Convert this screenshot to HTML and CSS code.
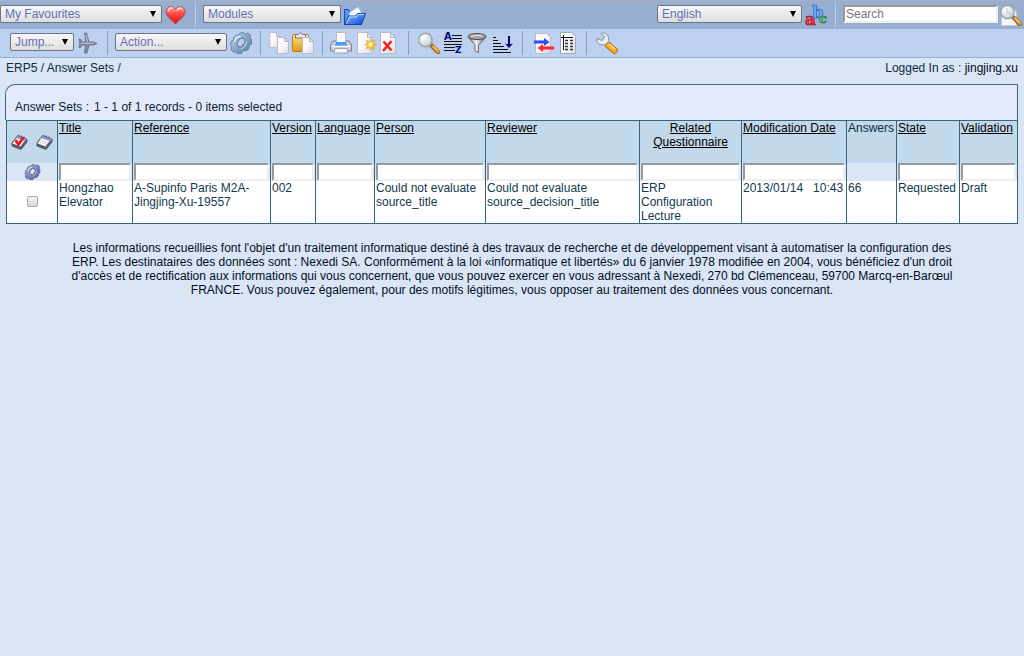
FILE: index.html
```html
<!DOCTYPE html>
<html lang="en">
<head>
<meta charset="utf-8">
<title>ERP5 - Answer Sets</title>
<link rel="stylesheet" href="styles.css">
</head>
<body>
<svg class="defs" aria-hidden="true">
  <defs>
    <linearGradient id="g-paper" x1="0" y1="0" x2="1" y2="1"><stop offset="0" stop-color="#fff"/><stop offset=".5" stop-color="#f8f8fb"/><stop offset="1" stop-color="#d9dbe4"/></linearGradient>
    <linearGradient id="g-heart" x1="0" y1="0" x2="0" y2="1"><stop offset="0" stop-color="#ffb0a8"/><stop offset=".4" stop-color="#ff4a42"/><stop offset="1" stop-color="#dc1010"/></linearGradient>
    <linearGradient id="g-folder" x1="0" y1="0" x2="1" y2="1"><stop offset="0" stop-color="#8cc8ff"/><stop offset="1" stop-color="#0a3fd8"/></linearGradient>
    <linearGradient id="g-steel" x1="0" y1="0" x2="1" y2="1"><stop offset="0" stop-color="#c4d6e8"/><stop offset=".5" stop-color="#8aa9c8"/><stop offset="1" stop-color="#557899"/></linearGradient>
    <linearGradient id="g-violet" x1="0" y1="0" x2="1" y2="1"><stop offset="0" stop-color="#b4b4dc"/><stop offset=".5" stop-color="#8585bd"/><stop offset="1" stop-color="#55558c"/></linearGradient>
    <linearGradient id="g-gold" x1="0" y1="0" x2="0" y2="1"><stop offset="0" stop-color="#ffe48a"/><stop offset="1" stop-color="#e09a10"/></linearGradient>
    <linearGradient id="g-funnel" x1="0" y1="0" x2="1" y2="0"><stop offset="0" stop-color="#666"/><stop offset=".45" stop-color="#f4f4f4"/><stop offset="1" stop-color="#555"/></linearGradient>
    <radialGradient id="g-lens" cx=".35" cy=".3" r=".8"><stop offset="0" stop-color="#fff"/><stop offset=".6" stop-color="#dbe3e1"/><stop offset="1" stop-color="#b5c4c6"/></radialGradient>
    <symbol id="page" viewBox="0 0 12 17"><path d="M.5.5h7l4 4v12H.5z" fill="url(#g-paper)" stroke="#b9bcc8"/><path d="M7.500.5v4h4z" fill="#e4e5ec" stroke="#b0b3c0"/></symbol>
    <symbol id="lens" viewBox="0 0 22 22"><path d="M14 14l6 6" stroke="#80644a" stroke-width="4.500" stroke-linecap="round"/><path d="M15 14.500l5 5" stroke="#f39a1f" stroke-width="3" stroke-linecap="round"/><path d="M15.500 14.500l4 4" stroke="#ffe0a0" stroke-width="1"/><circle cx="7.500" cy="8" r="6.700" fill="url(#g-lens)" stroke="#9aa5a8" stroke-width="1.400"/><path d="M4 7q1-3 4-3" stroke="#fff" stroke-width="1.500" fill="none"/></symbol>
    <symbol id="gear" viewBox="0 0 22 22">
      <path class="gear-rim" d="M10 1l3.500-.5 1.500 2 2.500-1.500 3 2-.5 3.500 1.500 1v4.500l-2.500 1.500v3l-3 2.500-2.500-.5-2 3-4 .5-1-2.500-2.500 1-3-2.500.5-3L.5 13.500 1 9.500l2.500-1V5.500l3-2.500 2 .5z" stroke-width=".9"/>
      <path d="M4.500 10Q5.500 5 10.500 4" fill="none" stroke="#eaf2fb" stroke-width="1.300"/>
      <ellipse class="gear-hole" cx="11" cy="10.500" rx="3.300" ry="4.800" transform="rotate(35 11 10.500)" stroke-width="1.200"/>
      <path d="M16.500 9.500Q16 15 11 17" fill="none" stroke="#d5e2f0" stroke-width="1"/>
    </symbol>
    <symbol id="notes" viewBox="0 0 17 16"><path d="M6.500 1.500L16 5v3l-6 7.500L1 12V9z" fill="#5c5f69" stroke="#444a55" stroke-width=".8"/><path d="M5.500 3.500L14 6.500 9.500 12.500 1.500 9.500z" fill="#f6f6fb"/><path d="M6.500 1.500L16 5l-1.800 2.200L5 4z" fill="#9695cf"/><path d="M4.500 6l7 2.700M3.500 8l7 2.600" stroke="#c4c6d0" stroke-width=".7"/><path d="M8 .8v2M10.500 1.600v2M13 2.600v2" stroke="#555"/></symbol>
  </defs>
</svg>

<header>
  <form class="bar bar-main">
    <div class="group first">
      <span class="pick pick-fav"><select aria-label="My Favourites"><option>My Favourites</option></select></span>
      <button type="button" class="icon" aria-label="Favourites"><svg viewBox="0 0 22 22"><path d="M10.500 20C7 16 1 12.500 1 7.500 1 2 8 1 10.500 5.500 13 1 20 2 20 7.500c0 5-6 8.500-9.500 12.500z" fill="url(#g-heart)" stroke="#b83a48" stroke-width=".8"/><path d="M3.500 7q.5-3.500 4-3M12.500 5.500q2-2 4-1" stroke="#ffd9d4" stroke-width="1.600" fill="none" stroke-linecap="round"/></svg></button>
    </div>
    <div class="group">
      <span class="pick pick-modules"><select aria-label="Modules"><option>Modules</option></select></span>
      <button type="button" class="icon" aria-label="Open module"><svg viewBox="0 0 22 22"><path d="M.5 5.500h4l1 2v12l-5 1z" fill="#4c9bf0" stroke="#1747c4"/><path d="M5 9l9-6 4 7-2 6-9 2z" fill="#fff" stroke="#b9c7ea" stroke-width=".7"/><path d="M1 20.500L4.500 12h7l2-2.500h8L17.500 20.500z" fill="url(#g-folder)" stroke="#1440c8"/><path d="M2.500 19.500L5.300 13h6.700l2-2.500h6" stroke="#c9e8ff" fill="none"/></svg></button>
    </div>
    <div class="group last">
      <span class="pick pick-lang"><select aria-label="Language"><option>English</option></select></span>
      <button type="button" class="icon" aria-label="Change language"><svg viewBox="0 0 22 22" class="abc"><text x="0" y="21" font-size="17" fill="#f03038" stroke="#b00d18">a</text><text x="7" y="14" font-size="16" fill="#6fb0ff" stroke="#2560c8">b</text><text x="14" y="19" font-size="13" fill="#58d66c" stroke="#14752c">c</text></svg></button>
    </div>
    <div class="group search">
      <input type="text" class="field" placeholder="Search" aria-label="Search">
      <button type="submit" class="icon" aria-label="Search"><svg viewBox="0 0 22 22"><path d="M1.500 4h11l4 4v13.500h-15z" fill="#f6f6fa" stroke="#c3c7d2"/><use href="#lens" width="22" height="22"/><path d="M7 4v5h5" fill="none" stroke="#c3c9cc"/></svg></button>
    </div>
  </form>

  <form class="bar bar-context">
    <div class="group first indent">
      <span class="pick pick-jump"><select aria-label="Jump"><option>Jump...</option></select></span>
      <button type="button" class="icon" aria-label="Jump"><svg viewBox="0 0 22 22"><path d="M2 7h1.500l2 3h3L8 3l-.5-2h2L12 10h4.500l3.500 1.500-3.500 1.500H12l-2 8H7.500l1-8h-3l-2 2.500H2l.8-4z" fill="#85899f" stroke="#666a84" stroke-width=".8"/><path d="M4 11.300h13M9 3l1.500 7" stroke="#cfd2e0" stroke-width=".9"/></svg></button>
    </div>
    <div class="group">
      <span class="pick pick-action"><select aria-label="Action"><option>Action...</option></select></span>
      <button type="button" class="icon" aria-label="Run action"><svg viewBox="0 0 22 22" class="steel"><use href="#gear" width="22" height="22"/></svg></button>
    </div>
    <div class="group">
      <button type="button" class="icon" aria-label="Copy"><svg viewBox="0 0 22 22"><use href="#page" x="1" y="0" width="12" height="16"/><use href="#page" x="9" y="5" width="12" height="17"/></svg></button>
      <button type="button" class="icon" aria-label="Paste"><svg viewBox="0 0 22 22"><rect x=".5" y="2.500" width="16" height="17" rx="1" fill="url(#g-gold)" stroke="#c07e0c"/><path d="M3.500 6V2.500h3q2-3.500 4 0h3V6z" fill="#e8e8ee" stroke="#77798a"/><use href="#page" x="10" y="5" width="12" height="17"/></svg></button>
    </div>
    <div class="group">
      <button type="button" class="icon" aria-label="Print"><svg viewBox="0 0 22 22"><path d="M3 9h16l2.500 4v6h-21v-6z" fill="#cdd0da" stroke="#7d8191"/><path d="M6.500.5h9V11h-9z" fill="#fafbff" stroke="#b7bccb"/><path d="M6 10h10l1 3.500H5z" fill="#3f9df2"/><path d="M2 14.500h18" stroke="#fff"/><path d="M5 16.500h12l1 4.500H4z" fill="#f7f8fc" stroke="#a0a4b2"/></svg></button>
      <button type="button" class="icon" aria-label="New"><svg viewBox="0 0 22 22"><path d="M3.500.5h10l5 5v16h-15z" fill="url(#g-paper)" stroke="#b9bcc8"/><path d="M13.500.5v5h5z" fill="#e6e7ee" stroke="#b0b3c0"/><path d="M16.500 6.500l1 3 3-1-1 3 3 1-3 1 1 3-3-1-1 3-1-3-3 1 1-3-3-1 3-1-1-3 3 1z" fill="#ffd34a" stroke="#dd9a20" stroke-width=".7"/><circle cx="16.500" cy="12.500" r="1.700" fill="#fff6c4"/></svg></button>
      <button type="button" class="icon" aria-label="Delete"><svg viewBox="0 0 22 22"><path d="M2.500.5h10l5 5v16h-15z" fill="url(#g-paper)" stroke="#b9bcc8"/><path d="M12.500.5v5h5z" fill="#e6e7ee" stroke="#b0b3c0"/><path d="M5.500 9.500l8 9M13.500 9l-8.500 10" stroke="#f02414" stroke-width="2.600"/></svg></button>
    </div>
    <div class="group wide">
      <button type="button" class="icon" aria-label="Find"><svg viewBox="0 0 22 22"><use href="#lens" width="22" height="22"/></svg></button>
      <button type="button" class="icon" aria-label="Sort"><svg viewBox="0 0 22 22" class="az"><path d="M10 3.500h10M10 6.500h10M2 9.500h18M2 12.500h18M2 15.500h11M2 18.500h11" stroke="#111"/><text x="2" y="8" font-size="10">A</text><text x="13" y="21" font-size="9">Z</text></svg></button>
      <button type="button" class="icon" aria-label="Filter"><svg viewBox="0 0 22 22"><path d="M2 5l7 8v6l3.500 1.500V13L20 5z" fill="url(#g-funnel)" stroke="#555" stroke-width=".8"/><ellipse cx="11" cy="4.500" rx="9" ry="3" fill="#a4a4a4" stroke="#4c4c4c"/><path d="M5 4.500q6-2.500 11-.5" stroke="#eee" fill="none"/></svg></button>
      <button type="button" class="icon" aria-label="Sort order"><svg viewBox="0 0 22 22"><path d="M3 5.500h3M3 8.500h5M3 11.500h8M3 14.500h11M3 17.500h15M3 20.500h18" stroke="#111"/><path d="M19 4v10" stroke="#00007c" stroke-width="2"/><path d="M15 11.500l4 4.500 4-4.500-4 1z" fill="#00007c"/></svg></button>
    </div>
    <div class="group wide">
      <button type="button" class="icon" aria-label="Import and export"><svg viewBox="0 0 22 22"><path d="M3.500 1.500h11l4 4v16h-15z" fill="url(#g-paper)" stroke="#b9bcc8"/><path d="M2 8.500h10V6l5.500 4L12 14v-2.500H2z" fill="#2b50f0"/><path d="M22 14.500H11V12l-5.500 4L11 20v-2.500h11z" fill="#ff2733"/></svg></button>
      <button type="button" class="icon" aria-label="Report"><svg viewBox="0 0 22 22"><path d="M4.500.5h11l4 4v17h-15z" fill="url(#g-paper)" stroke="#a3a6b3"/><path d="M5 5.500h12M7.500 3v15" stroke="#111"/><path d="M9 8.500h3M14 8.500h3M9 11.500h3M14 11.500h3M9 14.500h3M14 14.500h3M9 17.500h3M14 17.500h3" stroke="#333" stroke-width="1.300"/></svg></button>
    </div>
    <div class="group wide">
      <button type="button" class="icon" aria-label="Configure"><svg viewBox="0 0 22 22"><path d="M5 1.500L8.500 5 6 8.500 1 6.500C0 11 4 14 8 12.500l4 3.500 3.500-4L12.500 8.500C13.500 3.500 9.500-.5 5 1.500z" fill="#e8ebf2" stroke="#8790a3"/><path d="M12.500 13.500l6 5" stroke="#b36c10" stroke-width="6.500" stroke-linecap="round"/><path d="M12.500 13.500l6 5" stroke="#ffad22" stroke-width="4.800" stroke-linecap="round"/><path d="M13 12l6 5" stroke="#ffe29a" stroke-width="1.300"/></svg></button>
    </div>
  </form>
</header>

<div class="status">
  <nav><a href="#">ERP5</a> / <a href="#">Answer Sets</a> /</nav>
  <p>Logged In as : <strong>jingjing.xu</strong></p>
</div>

<main>
  <div class="list-head"><a href="#">Answer Sets :</a><span>1 - 1 of 1 records - 0 items selected</span></div>
  <table>
    <colgroup>
      <col class="c-select"><col class="c-title"><col class="c-reference"><col class="c-version"><col class="c-language"><col class="c-person"><col class="c-reviewer"><col class="c-related"><col class="c-date"><col class="c-answers"><col class="c-state"><col class="c-validation">
    </colgroup>
    <thead>
      <tr class="titles">
        <th><div class="marks">
          <button type="button" class="mark" aria-label="Check all"><svg viewBox="0 0 17 16"><use href="#notes" width="17" height="16"/><path d="M4.500 6l3 4.500L12.500 3.500" fill="none" stroke="#f01414" stroke-width="2.600"/></svg></button>
          <button type="button" class="mark" aria-label="Uncheck all"><svg viewBox="0 0 17 16"><use href="#notes" width="17" height="16"/></svg></button>
        </div></th>
        <th><a href="#">Title</a></th>
        <th><a href="#">Reference</a></th>
        <th><a href="#">Version</a></th>
        <th><a href="#">Language</a></th>
        <th><a href="#">Person</a></th>
        <th><a href="#">Reviewer</a></th>
        <th class="center"><a href="#">Related Questionnaire</a></th>
        <th><a href="#">Modification Date</a></th>
        <th>Answers</th>
        <th><a href="#">State</a></th>
        <th><a href="#">Validation</a></th>
      </tr>
      <tr class="filters">
        <td class="center"><button type="button" class="mark" aria-label="Apply filters"><svg viewBox="0 0 22 22" class="violet"><use href="#gear" width="22" height="22"/></svg></button></td>
        <td><input type="text" class="field" aria-label="Filter by title"></td>
        <td><input type="text" class="field" aria-label="Filter by reference"></td>
        <td><input type="text" class="field" aria-label="Filter by version"></td>
        <td><input type="text" class="field" aria-label="Filter by language"></td>
        <td><input type="text" class="field" aria-label="Filter by person"></td>
        <td><input type="text" class="field" aria-label="Filter by reviewer"></td>
        <td><input type="text" class="field" aria-label="Filter by related questionnaire"></td>
        <td><input type="text" class="field" aria-label="Filter by modification date"></td>
        <td></td>
        <td><input type="text" class="field" aria-label="Filter by state"></td>
        <td><input type="text" class="field" aria-label="Filter by validation"></td>
      </tr>
    </thead>
    <tbody>
      <tr>
        <td class="pickrow"><input type="checkbox" aria-label="Select Hongzhao Elevator"></td>
        <td>Hongzhao Elevator</td>
        <td>A-Supinfo Paris M2A-Jingjing-Xu-19557</td>
        <td>002</td>
        <td></td>
        <td>Could not evaluate source_title</td>
        <td>Could not evaluate source_decision_title</td>
        <td>ERP Configuration Lecture</td>
        <td class="nowrap">2013/01/14 &nbsp; 10:43</td>
        <td>66</td>
        <td>Requested</td>
        <td>Draft</td>
      </tr>
    </tbody>
  </table>
</main>

<footer>Les informations recueillies font l'objet d'un traitement informatique destiné à des travaux de recherche et de développement visant à automatiser la configuration des ERP. Les destinataires des données sont : Nexedi SA. Conformément à la loi «informatique et libertés» du 6 janvier 1978 modifiée en 2004, vous bénéficiez d'un droit d'accès et de rectification aux informations qui vous concernent, que vous pouvez exercer en vous adressant à Nexedi, 270 bd Clémenceau, 59700 Marcq-en-Barœul FRANCE. Vous pouvez également, pour des motifs légitimes, vous opposer au traitement des données vous concernant.</footer>
</body>
</html>
```

FILE: styles.css
```css
* { box-sizing: border-box; }

body {
  margin: 0;
  background: #dae6f6;
  color: #0d2b3f;
  font: 12px/14px "Liberation Sans", Arial, sans-serif;
}

a { color: inherit; text-decoration: none; }
p { margin: 0; }
strong { font-weight: normal; color: #000a2a; }
.defs { position: absolute; width: 0; height: 0; }

/* Toolbars */
.bar { display: flex; height: 29px; padding-top: 2px; margin: 0; }
.bar-main { background: #98aed0; border-top: 1px solid #a9afc4; }
.bar-context { background: #bdd0f0; border-bottom: 1px solid #98aed0; }

.group {
  display: flex;
  align-items: flex-start;
  gap: 2px;
  height: 24px;
  padding: 1px 8px 0 7px;
  border-left: 1px solid #7fa5c6;
}
.bar-main .group { border-color: #b4d0e8; }
.bar .first { border-left: 0; padding-left: 0; }
.bar .indent { padding-left: 10px; }
.bar .last { border-left: 0; margin-left: auto; }
.wide { padding-left: 9px; }
.wide:has(> :nth-child(4)) { padding-right: 10px; }
.search { padding-right: 2px; }

.pick { position: relative; margin: 1px 1px 0 0; }
.pick::after {
  content: "";
  position: absolute;
  right: 6px;
  top: 6px;
  width: 6px;
  height: 6px;
  background: #000;
  clip-path: polygon(0 0, 100% 0, 50% 100%);
  pointer-events: none;
}
.pick select {
  display: block;
  appearance: none;
  width: 100%;
  height: 18px;
  margin: 0;
  padding: 0 16px 0 4px;
  border: 1px solid #6b7488;
  border-radius: 2px;
  background: linear-gradient(#f8f8f8, #dedede);
  color: #6070b4;
  font: inherit;
}
.pick-fav { width: 162px; }
.pick-modules { width: 138px; }
.pick-lang { width: 145px; }
.pick-jump { width: 64px; }
.pick-action { width: 112px; }

.icon, .mark { padding: 0; border: 0; background: none; cursor: pointer; }
.icon { width: 22px; height: 22px; }
.mark { width: 17px; height: 16px; }
.icon svg, .mark svg { display: block; width: 100%; height: 100%; overflow: visible; }
.abc { font-family: "DejaVu Serif", serif; font-weight: bold; stroke-width: .7; }
.az { font-family: "DejaVu Sans", sans-serif; font-weight: bold; fill: #00007c; }
.steel { --rim: url(#g-steel); --edge: #5d7ea3; --hole: #bdd0f0; }
.violet { --rim: url(#g-violet); --edge: #56568c; --hole: #dae6f6; }
.gear-rim { fill: var(--rim); stroke: var(--edge); }
.gear-hole { fill: var(--hole); stroke: var(--edge); }

.field {
  display: block;
  width: 100%;
  height: 18px;
  margin: 0;
  padding: 0 1px;
  border: 2px solid;
  border-color: #9a9a9a #eee #eee #9a9a9a;
  background: #fff;
  font: inherit;
}
.field::placeholder { color: #777; }
.search .field { width: 155px; margin-top: 1px; }

/* Breadcrumb and user */
.status { display: flex; justify-content: space-between; padding: 3px 6px 9px; }

/* Answer set list */
main { padding: 0 6px 0 5px; }
.list-head {
  display: flex;
  align-items: center;
  gap: 5px;
  height: 36px;
  padding: 8px 9px 0;
  border: 1px solid #3b6a80;
  border-bottom: 0;
  border-top-left-radius: 10px;
  background: #e3e9f9;
  color: #081c38;
}
main table {
  width: calc(100% - 1px);
  margin-left: 1px;
  border-collapse: collapse;
  table-layout: fixed;
  border: 1px solid #34657c;
}
th, td {
  padding: 0 1px;
  border-left: 1px solid #34657c;
  font-weight: normal;
  text-align: left;
  vertical-align: top;
}
th a { color: #000; text-decoration: underline; }
.titles { height: 42px; background: #c1d9eb; }
.filters { height: 18px; background: #dae6f6; }
.center { text-align: center; }
.filters .mark { display: block; margin: 1px auto; }
.marks { display: flex; justify-content: center; gap: 8px; padding-top: 13px; }
tbody tr { background: #fff; color: #123a50; }
.pickrow { text-align: center; vertical-align: middle; }
.nowrap { white-space: nowrap; }

.c-select { width: 51px; }
.c-title { width: 75px; }
.c-reference { width: 138px; }
.c-version { width: 45px; }
.c-language { width: 59px; }
.c-person { width: 111px; }
.c-reviewer { width: 154px; }
.c-related { width: 102px; }
.c-date { width: 105px; }
.c-answers { width: 50px; }
.c-state { width: 63px; }
.c-validation { width: 58px; }

input[type="checkbox"] {
  display: block;
  appearance: none;
  width: 11px;
  height: 11px;
  margin: 0 auto;
  border: 1px solid #aaa;
  border-radius: 2px;
  background: linear-gradient(#f6f6f6, #d6d6d6);
}
input[type="checkbox"]:checked { background: #6070b4; }

footer { padding: 17px 6% 0; text-align: center; color: #000f1e; }
```
